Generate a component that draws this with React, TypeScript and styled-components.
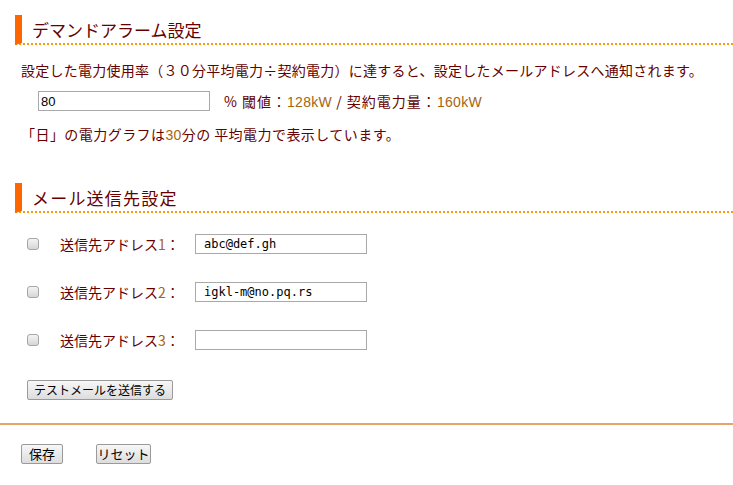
import React from "react";
import styled, { createGlobalStyle } from "styled-components";

const GlobalStyle = createGlobalStyle`
  body {
    margin: 0;
    background: #ffffff;
    font-family: "Noto Sans CJK JP", "Noto Sans", sans-serif;
    color: #660000;
  }
`;

const Page = styled.div`
  width: 733px;
  padding-top: 15px;
`;

const Section = styled.section`
  padding-left: 15px;
`;

const Heading = styled.h2<{ $gap?: number; $spacing?: number }>`
  box-sizing: border-box;
  margin: ${({ $gap }) => $gap ?? 0}px 0 0 0;
  height: 30px;
  padding-left: 10px;
  border-left: 7px solid #ff6600;
  border-bottom: 2px dotted #ff9900;
  font-size: 17px;
  font-weight: normal;
  line-height: 30px;
  letter-spacing: ${({ $spacing }) => $spacing ?? 0}px;
  color: #660000;
`;

const Text = styled.p<{ $gap: number; $spacing: number }>`
  margin: ${({ $gap }) => $gap}px 0 0 6px;
  height: 20px;
  font-size: 14px;
  line-height: 20px;
  letter-spacing: ${({ $spacing }) => $spacing}px;
  white-space: nowrap;
`;

const Value = styled.span`
  color: #a8650c;
  font-family: "Liberation Sans", Arial, sans-serif;
  font-size: 14px;
  line-height: 1;
  letter-spacing: 0.3px;
`;

const ThresholdRow = styled.div`
  display: flex;
  align-items: center;
  height: 20px;
  margin-top: 11px;
  padding-left: 23px;
  font-size: 14px;
`;

const TextInput = styled.input<{ $mono?: boolean }>`
  box-sizing: border-box;
  width: 172px;
  height: 20px;
  margin: 0;
  padding: 0 ${({ $mono }) => ($mono ? 8 : 2)}px;
  border: 1px solid #a9a9a9;
  background: #fff;
  color: #000;
  font-family: ${({ $mono }) =>
    $mono ? `"DejaVu Sans Mono", "Liberation Mono", monospace` : `"Liberation Sans", Arial, sans-serif`};
  font-size: ${({ $mono }) => ($mono ? 12 : 13)}px;
  outline: none;
`;

const Unit = styled.span`
  margin-left: 14px;
  white-space: nowrap;
  line-height: 20px;
  letter-spacing: 1px;
`;

const Rows = styled.div`
  margin-top: 7px;
  padding-left: 12px;
`;

const Row = styled.div`
  display: flex;
  align-items: center;
  height: 48px;
`;

const Check = styled.input`
  appearance: none;
  box-sizing: border-box;
  width: 12px;
  height: 12px;
  margin: 0 21px 0 0;
  border: 1px solid #a5a5a5;
  border-radius: 3px;
  background: linear-gradient(#f4f4f4, #d6d6d6);
`;

const Label = styled.label`
  width: 135px;
  font-size: 14px;
  line-height: 20px;
  white-space: nowrap;
`;

const Num = styled.span`
  color: #a8650c;
`;

const Button = styled.button<{ $width: number; $size?: number }>`
  box-sizing: border-box;
  width: ${({ $width }) => $width}px;
  height: 20px;
  margin: 0;
  padding: 0;
  border: 1px solid #9a9a9a;
  border-radius: 2px;
  background: linear-gradient(#f7f7f7, #dddddd);
  color: #000;
  font-family: "Noto Sans CJK JP", sans-serif;
  font-size: ${({ $size }) => $size ?? 13}px;
  line-height: 18px;
`;

const TestArea = styled.div`
  display: flex;
  margin-top: 16px;
  padding-left: 12px;
`;

const Rule = styled.hr`
  margin: 23px 0 0 0;
  height: 2px;
  border: none;
  background: #e8a468;
`;

const Footer = styled.div`
  display: flex;
  gap: 33px;
  margin-top: 19px;
  padding-left: 21px;
`;

const addresses = ["abc@def.gh", "igkl-m@no.pq.rs", ""];

export default function App() {
  return (
    <Page>
      <GlobalStyle />
      <Section>
        <Heading>デマンドアラーム設定</Heading>
        <Text $gap={15} $spacing={0.25}>
          設定した電力使用率（３０分平均電力÷契約電力）に達すると、設定したメールアドレスへ通知されます。
        </Text>
        <ThresholdRow>
          <TextInput defaultValue="80" />
          <Unit>
            % 閾値：<Value>128kW</Value> / 契約電力量：<Value>160kW</Value>
          </Unit>
        </ThresholdRow>
        <Text $gap={13} $spacing={0.45}>
          「日」の電力グラフは<Value>30</Value>分の 平均電力で表示しています。
        </Text>

        <Heading $gap={39} $spacing={1.2}>
          メール送信先設定
        </Heading>
        <Rows>
          {addresses.map((addr, i) => (
            <Row key={i}>
              <Check type="checkbox" />
              <Label>
                送信先アドレス<Num>{i + 1}</Num>：
              </Label>
              <TextInput $mono defaultValue={addr} />
            </Row>
          ))}
        </Rows>
        <TestArea>
          <Button $width={146} $size={12}>
            テストメールを送信する
          </Button>
        </TestArea>
      </Section>
      <Rule />
      <Footer>
        <Button $width={42}>保存</Button>
        <Button $width={55}>リセット</Button>
      </Footer>
    </Page>
  );
}
